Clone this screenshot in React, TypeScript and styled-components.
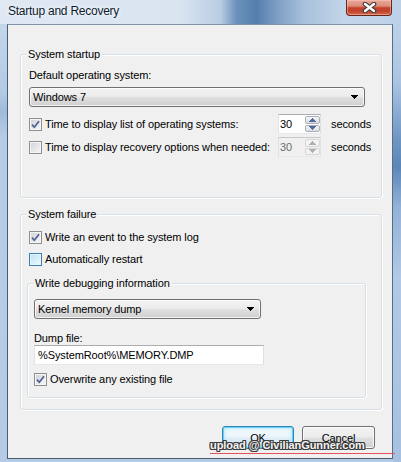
import React from "react";
import styled, { createGlobalStyle } from "styled-components";

const GlobalStyle = createGlobalStyle`
  html, body {
    margin: 0;
    padding: 0;
  }
  body {
    width: 401px;
    height: 462px;
    overflow: hidden;
    font-family: "Liberation Sans", Arial, sans-serif;
    background: #b8cfe8;
  }
`;

/* ---------- window frame ---------- */

const Window = styled.div`
  position: relative;
  box-sizing: border-box;
  width: 401px;
  height: 462px;
  display: flex;
  flex-direction: column;
  padding: 0 8px 3px 7px;
  background:
    linear-gradient(
        to right,
        #dfe8f3 0%,
        #d9e4f1 45%,
        #b9cde3 55%,
        #6b90ba 59%,
        #557fae 64%,
        #7c9dc3 69%,
        #a9c1dc 76%,
        #c3d5e9 86%,
        #bcd1e8 100%
      )
      top left / 100% 24px no-repeat,
    linear-gradient(
        to bottom,
        #c4d7ec 0%,
        #a9c4e2 18%,
        #6f97c4 30%,
        #5a86b8 36%,
        #93b3d8 45%,
        #b0c9e5 60%,
        #a6c1e1 100%
      )
      top right / 8px 100% no-repeat,
    linear-gradient(
        to bottom,
        #c9dbee 0%,
        #b1cae6 20%,
        #9fbbdb 24%,
        #b6cde7 30%,
        #b3cbe6 100%
      );
`;

const TitleBar = styled.div`
  height: 24px;
  flex: none;
  display: flex;
  align-items: flex-start;
`;

const Caption = styled.span`
  margin: 4px 0 0 1px;
  font-size: 12px;
  line-height: 14px;
  letter-spacing: -0.25px;
  color: #0c1a2e;
  text-shadow: 0 0 6px rgba(255, 255, 255, 0.95), 0 0 2px rgba(255, 255, 255, 0.9);
`;

const CloseButton = styled.div`
  box-sizing: border-box;
  width: 46px;
  height: 16px;
  margin: 0 1px 0 auto;
  border: 1px solid #6a2418;
  border-top: none;
  border-radius: 0 0 4px 4px;
  background: linear-gradient(
    to bottom,
    #e9a797 0%,
    #dc8e7c 40%,
    #c5432c 52%,
    #c2412b 72%,
    #d2694e 100%
  );
  box-shadow: inset 0 0 0 1px rgba(255, 210, 200, 0.45);
  display: flex;
  align-items: center;
  justify-content: center;
`;

const CloseGlyph = () => (
  <svg width="15" height="11" viewBox="0 0 15 11">
    <path d="M3 2 L12 9 M12 2 L3 9" stroke="#3a3a3a" strokeWidth="4.6" strokeLinecap="round" />
    <path d="M3 2 L12 9 M12 2 L3 9" stroke="#ffffff" strokeWidth="2.4" strokeLinecap="round" />
  </svg>
);

/* ---------- client area ---------- */

const Client = styled.div`
  flex: 1;
  display: flex;
  flex-direction: column;
  border: 1px solid;
  border-color: #8193a8 #5c6d82 #4c5b6e #4c5b6e;
  background: #f0f0f0;
  padding: 22px 10px 9px 12px;
  color: #000;
  font-size: 11px;
  letter-spacing: -0.1px;
`;

const GroupBox = styled.fieldset<{ $top?: number }>`
  margin: ${(p) => p.$top ?? 0}px 0 0 0;
  padding: 0;
  min-width: 0;
  border: 1px solid #d5dfe5;
  border-radius: 3px;
  box-shadow: inset 1px 1px 0 #ffffff, 1px 1px 0 #ffffff;
`;

const GroupTitle = styled.legend`
  margin-left: 5px;
  padding: 0 2px;
  font-size: 11px;
  line-height: 14px;
  background: #f0f0f0;
`;

const GroupBody = styled.div<{ $pad: string }>`
  display: flex;
  flex-direction: column;
  padding: ${(p) => p.$pad};
`;

const Label = styled.div<{ $top?: number; $lh?: number }>`
  margin-top: ${(p) => p.$top ?? 0}px;
  line-height: ${(p) => p.$lh ?? 14}px;
  white-space: nowrap;
`;

/* ---------- drop-down list ---------- */

const Combo = styled.div<{ $top?: number; $width?: number }>`
  box-sizing: border-box;
  margin-top: ${(p) => p.$top ?? 0}px;
  width: ${(p) => (p.$width ? `${p.$width}px` : "auto")};
  height: 20px;
  display: flex;
  align-items: center;
  padding: 0 6px 0 3px;
  border: 1px solid #707070;
  border-radius: 3px;
  background: linear-gradient(to bottom, #f3f3f3 0%, #ececec 45%, #dedede 55%, #d0d0d0 100%);
  box-shadow: inset 0 0 0 1px rgba(255, 255, 255, 0.75);
  line-height: 14px;
`;

const ComboText = styled.span`
  flex: 1;
  white-space: nowrap;
`;

const DropArrow = () => (
  <svg width="7" height="4" viewBox="0 0 7 4" shapeRendering="crispEdges">
    <path d="M0 0 H7 L3.5 4 Z" fill="#000" />
  </svg>
);

/* ---------- check boxes ---------- */

const CheckRow = styled.div<{ $top?: number; $indent?: number }>`
  margin: ${(p) => p.$top ?? 0}px 0 0 ${(p) => p.$indent ?? 0}px;
  height: 16px;
  display: flex;
  align-items: center;
  gap: 3px;
  white-space: nowrap;
`;

const Box = styled.span<{ $hot?: boolean }>`
  box-sizing: border-box;
  width: 13px;
  height: 13px;
  flex: none;
  display: flex;
  align-items: center;
  justify-content: center;
  border: 1px solid ${(p) => (p.$hot ? "#3c7fb1" : "#8e8f8f")};
  background: ${(p) =>
    p.$hot
      ? "linear-gradient(135deg, #b8dff7 0%, #dcf0fb 60%, #eef8fd 100%)"
      : "linear-gradient(135deg, #cdd0d5 0%, #e6e7e9 55%, #f6f6f6 100%)"};
  box-shadow: inset 0 0 0 1px ${(p) => (p.$hot ? "#e4f5fd" : "#f6f6f6")};
`;

const Tick = () => (
  <svg width="11" height="11" viewBox="0 0 11 11">
    <path d="M2 5.6 L4.3 8.2 L9 2.2" fill="none" stroke="#4f5f91" strokeWidth="1.7" />
  </svg>
);

const Check = ({
  label,
  checked,
  hot,
  top,
  indent,
}: {
  label: string;
  checked?: boolean;
  hot?: boolean;
  top?: number;
  indent?: number;
}) => (
  <CheckRow $top={top} $indent={indent}>
    <Box $hot={hot}>{checked && <Tick />}</Box>
    <span>{label}</span>
  </CheckRow>
);

/* ---------- spin rows ---------- */

const SpinRow = styled.div<{ $top?: number }>`
  margin-top: ${(p) => p.$top ?? 0}px;
  display: grid;
  grid-template-columns: 249px 43px auto;
  align-items: center;
  height: 20px;
`;

const SpinField = styled.div<{ $disabled?: boolean }>`
  box-sizing: border-box;
  height: 20px;
  display: flex;
  border: 1px solid;
  border-color: ${(p) =>
    p.$disabled ? "#c4c7cb #dfe1e4 #e6e8eb #dfe1e4" : "#abadb3 #dbdfe6 #e3e9ef #e2e3ea"};
  background: ${(p) => (p.$disabled ? "#f0f0f0" : "#ffffff")};
  color: ${(p) => (p.$disabled ? "#6d6d6d" : "#000")};
`;

const SpinValue = styled.span`
  flex: 1;
  padding-left: 1px;
  line-height: 18px;
`;

const SpinButtons = styled.div`
  width: 15px;
  display: flex;
  flex-direction: column;
  gap: 1px;
  padding: 1px 0;
`;

const SpinHalf = styled.div<{ $disabled?: boolean }>`
  flex: 1;
  display: flex;
  align-items: center;
  justify-content: center;
  border: 1px solid ${(p) => (p.$disabled ? "#d6d7d9" : "#acb0b6")};
  border-radius: 2px;
  background: ${(p) =>
    p.$disabled ? "#f3f3f3" : "linear-gradient(to bottom, #f6f6f6 0%, #e9e9e9 50%, #dcdcdc 100%)"};
`;

const SpinArrow = ({ up, disabled }: { up?: boolean; disabled?: boolean }) => (
  <svg width="7" height="4" viewBox="0 0 7 4" shapeRendering="crispEdges">
    <path d={up ? "M0 4 L3.5 0 L7 4 Z" : "M0 0 H7 L3.5 4 Z"} fill={disabled ? "#b0b0b0" : "#4d6aa6"} />
  </svg>
);

const Seconds = styled.span`
  margin-left: 10px;
  white-space: nowrap;
`;

const SpinLine = ({
  label,
  value,
  checked,
  disabled,
  top,
}: {
  label: string;
  value: string;
  checked?: boolean;
  disabled?: boolean;
  top?: number;
}) => (
  <SpinRow $top={top}>
    <Check label={label} checked={checked} />
    <SpinField $disabled={disabled}>
      <SpinValue>{value}</SpinValue>
      <SpinButtons>
        <SpinHalf $disabled={disabled}>
          <SpinArrow up disabled={disabled} />
        </SpinHalf>
        <SpinHalf $disabled={disabled}>
          <SpinArrow disabled={disabled} />
        </SpinHalf>
      </SpinButtons>
    </SpinField>
    <Seconds>seconds</Seconds>
  </SpinRow>
);

/* ---------- text field ---------- */

const TextField = styled.div<{ $width: number }>`
  box-sizing: border-box;
  width: ${(p) => p.$width}px;
  height: 20px;
  padding-left: 3px;
  border: 1px solid;
  border-color: #abadb3 #dbdfe6 #e3e9ef #e2e3ea;
  background: #ffffff;
  line-height: 18px;
  white-space: nowrap;
`;

/* ---------- push buttons ---------- */

const ButtonBar = styled.div`
  margin-top: 16px;
  display: flex;
  justify-content: flex-end;
  gap: 8px;
  padding-right: 7px;
`;

const PushButton = styled.div<{ $default?: boolean; $width: number }>`
  box-sizing: border-box;
  width: ${(p) => p.$width}px;
  height: 23px;
  display: flex;
  align-items: center;
  justify-content: center;
  border: 1px solid ${(p) => (p.$default ? "#3c7fb1" : "#707070")};
  border-radius: 3px;
  background: ${(p) =>
    p.$default
      ? "linear-gradient(to bottom, #f4fafd 0%, #ebf5fb 45%, #dcedf7 55%, #cde6f4 100%)"
      : "linear-gradient(to bottom, #f3f3f3 0%, #ececec 45%, #dedede 55%, #d0d0d0 100%)"};
  box-shadow: ${(p) =>
    p.$default
      ? "inset 0 0 0 1px #5fd3fb, inset 0 0 3px 2px rgba(140, 225, 252, 0.55)"
      : "inset 0 0 0 1px rgba(255, 255, 255, 0.8)"};
  font-size: 11px;
  line-height: 14px;
`;

/* ---------- upload stamp in the corner ---------- */

const Stamp = styled.div`
  position: absolute;
  left: 210px;
  top: 439px;
  font-size: 11px;
  font-weight: bold;
  line-height: 13px;
  letter-spacing: -0.05px;
  color: #f4f4f4;
  white-space: nowrap;
  text-shadow:
    -1px -1px 0 #3a3a3a,
    1px -1px 0 #3a3a3a,
    -1px 1px 0 #3a3a3a,
    1px 1px 0 #3a3a3a,
    0 -1px 0 #3a3a3a,
    0 1px 0 #3a3a3a,
    -1px 0 0 #3a3a3a,
    1px 0 0 #3a3a3a;
`;

const StampRule = styled.div`
  position: absolute;
  left: 210px;
  top: 453px;
  width: 185px;
  height: 1px;
  background: #e2545a;
`;

export default function App() {
  return (
    <>
      <GlobalStyle />
      <Window>
        <TitleBar>
          <Caption>Startup and Recovery</Caption>
          <CloseButton>
            <CloseGlyph />
          </CloseButton>
        </TitleBar>

        <Client>
          <GroupBox>
            <GroupTitle>System startup</GroupTitle>
            <GroupBody $pad="7px 16px 40px 8px">
              <Label>Default operating system:</Label>
              <Combo $top={5}>
                <ComboText>Windows 7</ComboText>
                <DropArrow />
              </Combo>
              <SpinLine top={7} label="Time to display list of operating systems:" value="30" checked />
              <SpinLine top={3} label="Time to display recovery options when needed:" value="30" disabled />
            </GroupBody>
          </GroupBox>

          <GroupBox $top={9}>
            <GroupTitle>System failure</GroupTitle>
            <GroupBody $pad="8px 15px 11px 6px">
              <Check indent={2} label="Write an event to the system log" checked />
              <Check indent={2} top={6} label="Automatically restart" hot />

              <GroupBox $top={9}>
                <GroupTitle>Write debugging information</GroupTitle>
                <GroupBody $pad="9px 6px 10px 6px">
                  <Combo $width={227}>
                    <ComboText>Kernel memory dump</ComboText>
                    <DropArrow />
                  </Combo>
                  <Label $top={13} $lh={13}>
                    Dump file:
                  </Label>
                  <TextField $width={230}>%SystemRoot%\MEMORY.DMP</TextField>
                  <Check top={6} label="Overwrite any existing file" checked />
                </GroupBody>
              </GroupBox>
            </GroupBody>
          </GroupBox>

          <ButtonBar>
            <PushButton $default $width={72}>
              OK
            </PushButton>
            <PushButton $width={73}>Cancel</PushButton>
          </ButtonBar>
        </Client>

        <Stamp>upload @ CivilianGunner.com</Stamp>
        <StampRule />
      </Window>
    </>
  );
}
